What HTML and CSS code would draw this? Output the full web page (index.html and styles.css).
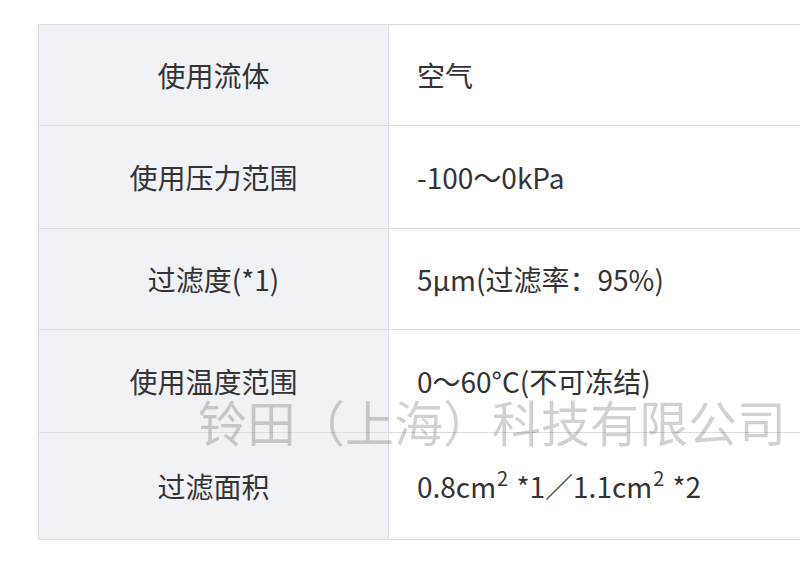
FILE: index.html
```html
<!DOCTYPE html>
<html lang="zh-CN">
<head>
<meta charset="utf-8">
<title>规格</title>
<link rel="stylesheet" href="styles.css">
</head>
<body>
<div class="spec-wrap">
  <table class="spec">
    <tbody>
      <tr class="r1"><th>使用流体</th><td>空气</td></tr>
      <tr class="r2"><th>使用压力范围</th><td>-100～0kPa</td></tr>
      <tr class="r3"><th>过滤度(*1)</th><td>5μm(过滤率：95%)</td></tr>
      <tr class="r4"><th>使用温度范围</th><td>0～60°C(不可冻结)</td></tr>
      <tr class="r5"><th>过滤面积</th><td>0.8cm<sup>2</sup> *1／1.1cm<sup>2</sup> *2</td></tr>
    </tbody>
  </table>
  <div class="watermark">铃田（上海）科技有限公司</div>
</div>
</body>
</html>
```
FILE: styles.css
```css
html, body {
  margin: 0;
  padding: 0;
  overflow: hidden;
  background: #ffffff;
}
body {
  font-family: "Noto Sans CJK SC", "Noto Sans", sans-serif;
  color: #333333;
}
.spec-wrap {
  position: relative;
  padding: 24px 0 0 38px;
  width: 900px;
}
.spec {
  border-collapse: collapse;
  width: 820px;
  font-size: 28px;
  line-height: 1.3;
}
.spec th, .spec td {
  border: 1px solid #dcdee2;
  padding: 0;
  font-weight: 400;
  vertical-align: middle;
}
.spec th {
  width: 349px;
  background: #f1f2f5;
  text-align: center;
}
.spec td {
  text-align: left;
  padding-left: 28px;
}
.r1 th, .r3 th { height: 100px; }
.r2 th, .r4 th { height: 102px; }
.r5 th { height: 106px; }
.spec sup {
  font-size: 20px;
  line-height: 0;
  vertical-align: 12px;
  margin-left: 1px;
  margin-right: 2px;
}
.watermark {
  position: absolute;
  left: 198px;
  top: 396px;
  font-size: 49px;
  line-height: 1;
  color: rgba(0, 0, 0, 0.18);
  white-space: nowrap;
  pointer-events: none;
}
```
